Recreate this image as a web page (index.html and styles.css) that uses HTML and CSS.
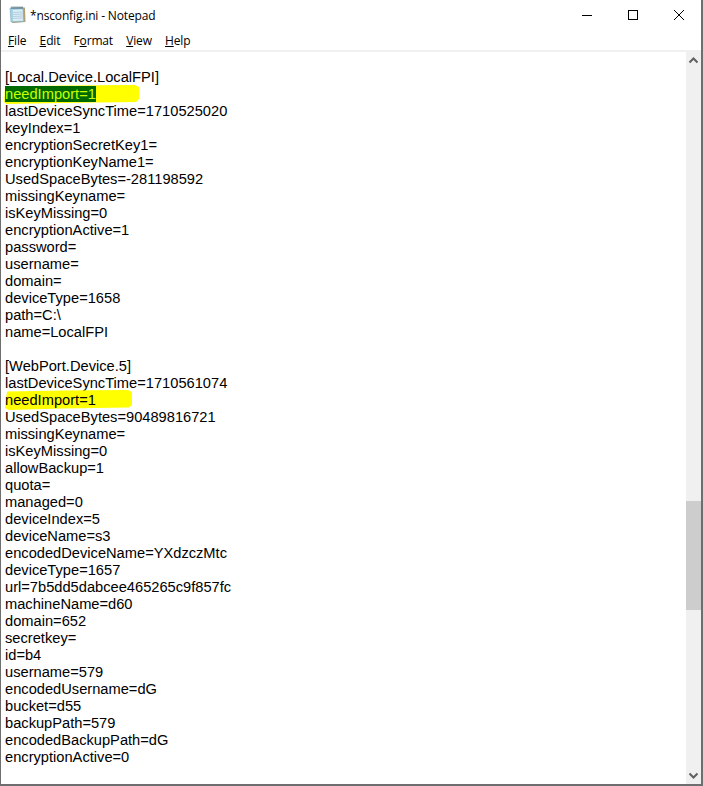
FILE: index.html
```html
<!DOCTYPE html>
<html lang="en">
<head>
<meta charset="utf-8">
<title>*nsconfig.ini - Notepad</title>
<link rel="stylesheet" href="styles.css">
</head>
<body>
<div class="window">
  <header class="titlebar">
    <svg class="app-icon" width="17" height="18" viewBox="0 0 17 18">
      <path d="M3.5 2 L16 1.5 L16.5 16 L3 17 Z" fill="#b79f6c"/>
      <path d="M1 2 L14 1.5 L15 15.5 L2 16 Z" fill="#a6d3e6" stroke="#7fa9bd" stroke-width="0.6"/>
      <path d="M4 4 L13.5 3.5 L14 14.5 L4 15 Z" fill="#dceef6"/>
      <path d="M4 6.5 L13.5 6 M4 8.5 L13.5 8 M4 10.5 L13.8 10 M4 12.5 L13.8 12" stroke="#a9c6d6" stroke-width="0.8"/>
      <path d="M3 0.5 V3 M5 0.5 V3 M7 0.5 V3 M9 0.5 V3 M11 0.5 V3 M13 0.5 V3" stroke="#46606e" stroke-width="1"/>
    </svg>
    <span class="title">*nsconfig.ini - Notepad</span>
    <div class="controls">
      <button class="control"><svg width="10" height="10" viewBox="0 0 10 10"><path d="M0 5.5H10" stroke="#000"/></svg></button>
      <button class="control"><svg width="10" height="10" viewBox="0 0 10 10"><rect x="0.5" y="0.5" width="9" height="9" fill="none" stroke="#000"/></svg></button>
      <button class="control"><svg width="10" height="10" viewBox="0 0 10 10"><path d="M0 0L10 10M10 0L0 10" stroke="#000"/></svg></button>
    </div>
  </header>
  <nav class="menubar">
    <span class="menu"><u>F</u>ile</span>
    <span class="menu"><u>E</u>dit</span>
    <span class="menu">F<u>o</u>rmat</span>
    <span class="menu"><u>V</u>iew</span>
    <span class="menu"><u>H</u>elp</span>
  </nav>
  <main class="editor">
    <div class="text">
      <div class="line">&nbsp;</div>
      <div class="line">[Local.Device.LocalFPI]</div>
      <div class="line"><svg class="brush brush-one" width="138" height="20" viewBox="0 0 138 20"><path d="M3 1.5 L60 0.5 L133 0 L137 2 L137 14 L134 17 L60 18 L4 19 L2 17 Z" fill="#ffff00"/></svg><span class="selected">needImport=1</span></div>
      <div class="line">lastDeviceSyncTime=1710525020</div>
      <div class="line">keyIndex=1</div>
      <div class="line">encryptionSecretKey1=</div>
      <div class="line">encryptionKeyName1=</div>
      <div class="line">UsedSpaceBytes=-281198592</div>
      <div class="line">missingKeyname=</div>
      <div class="line">isKeyMissing=0</div>
      <div class="line">encryptionActive=1</div>
      <div class="line">password=</div>
      <div class="line">username=</div>
      <div class="line">domain=</div>
      <div class="line">deviceType=1658</div>
      <div class="line">path=C:\</div>
      <div class="line">name=LocalFPI</div>
      <div class="line">&nbsp;</div>
      <div class="line">[WebPort.Device.5]</div>
      <div class="line">lastDeviceSyncTime=1710561074</div>
      <div class="line"><svg class="brush brush-two" width="130" height="21" viewBox="0 0 130 21"><path d="M4 1.5 L60 0.5 L125 0 L129 2 L129 15 L126 17.5 L60 18.5 L6 20 L2 18 Z" fill="#ffff00"/></svg><span class="plain">needImport=1</span></div>
      <div class="line">UsedSpaceBytes=90489816721</div>
      <div class="line">missingKeyname=</div>
      <div class="line">isKeyMissing=0</div>
      <div class="line">allowBackup=1</div>
      <div class="line">quota=</div>
      <div class="line">managed=0</div>
      <div class="line">deviceIndex=5</div>
      <div class="line">deviceName=s3</div>
      <div class="line">encodedDeviceName=YXdzczMtc</div>
      <div class="line">deviceType=1657</div>
      <div class="line">url=7b5dd5dabcee465265c9f857fc</div>
      <div class="line">machineName=d60</div>
      <div class="line">domain=652</div>
      <div class="line">secretkey=</div>
      <div class="line">id=b4</div>
      <div class="line">username=579</div>
      <div class="line">encodedUsername=dG</div>
      <div class="line">bucket=d55</div>
      <div class="line">backupPath=579</div>
      <div class="line">encodedBackupPath=dG</div>
      <div class="line">encryptionActive=0</div>
    </div>
    <aside class="scrollbar">
      <svg class="arrow" width="15" height="17" viewBox="0 0 15 17"><path d="M3.5 10.5L7.5 6.5L11.5 10.5" fill="none" stroke="#606060" stroke-width="2"/></svg>
      <div class="track"><div class="thumb"></div></div>
      <svg class="arrow" width="15" height="17" viewBox="0 0 15 17"><path d="M3.5 6.5L7.5 10.5L11.5 6.5" fill="none" stroke="#606060" stroke-width="2"/></svg>
    </aside>
  </main>
</div>
</body>
</html>
```
FILE: styles.css
```css
* { box-sizing: border-box; }
html, body { margin: 0; height: 100%; background: #fff; }
body { overflow: hidden; }
.window {
  width: 703px;
  height: 786px;
  display: flex;
  flex-direction: column;
  background: #fff;
  border-right: 2px solid #6e6e6e;
  border-bottom: 2px solid #6e6e6e;
  border-left: 1px solid #6e6e6e;
  font-family: "Liberation Sans", Arial, sans-serif;
  color: #000;
}
.titlebar {
  height: 30px;
  flex: none;
  display: flex;
  align-items: center;
  padding-left: 8px;
}
.app-icon { flex: none; }
.title {
  margin-left: 4px;
  font-family: "Open Sans", "Noto Sans", sans-serif;
  font-size: 12px;
  letter-spacing: -0.15px;
}
.controls { margin-left: auto; display: flex; margin-right: -1px; }
.control {
  width: 46px;
  height: 30px;
  padding: 0;
  border: 0;
  background: transparent;
  display: flex;
  align-items: center;
  justify-content: center;
}
.menubar {
  height: 20px;
  flex: none;
  display: flex;
  align-items: center;
  gap: 13.2px;
  padding-left: 7px;
  font-family: "Open Sans", "Noto Sans", sans-serif;
  font-size: 12px;
  letter-spacing: -0.15px;
}
.editor {
  flex: 1;
  min-height: 0;
  display: flex;
  border-top: 2px solid #f0f0f0;
}
.text {
  flex: 1;
  padding-left: 4px;
  font-size: 14.67px;
  line-height: 17px;
  overflow: hidden;
}
.line { position: relative; height: 17px; white-space: pre; }
.selected, .plain { position: relative; }
.selected { background: #006a00; color: #c8ff00; }
.brush { position: absolute; display: block; }
.brush-one { left: -3px; top: -1px; }
.brush-two { left: -2px; top: -2px; }
.scrollbar {
  width: 15px;
  flex: none;
  display: flex;
  flex-direction: column;
  background: #f0f0f0;
}
.arrow { flex: none; }
.track { flex: 1; padding-top: 432px; }
.thumb { height: 109px; background: #cdcdcd; }
```
